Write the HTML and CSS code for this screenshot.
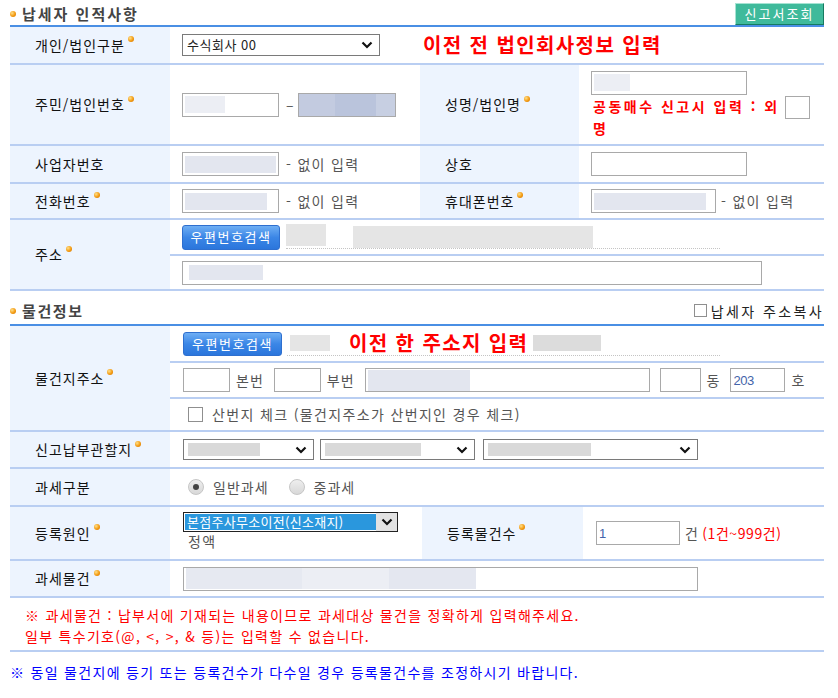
FILE: index.html
```html
<!DOCTYPE html>
<html lang="ko">

<head>
    <meta charset="UTF-8">
    <meta name="viewport" content="width=device-width, initial-scale=1.0">
    <title>납세자 인적사항</title>
    <link rel="stylesheet" href="styles.css">
</head>

<body>
    <div class="wrap">
        <div class="sec-head first">
            <h2 class="sec-title"><span class="dot"></span>납세자 인적사항</h2>
            <button class="btn-view" type="button">신고서조회</button>
        </div>

        <div class="form a">
            <div class="row r1">
                <div class="lab">개인/법인구분<i class="req"></i></div>
                <div class="val">
                    <div class="sel s-kind"><span>수식회사 00</span>
                        <svg width="12" height="8" viewBox="0 0 12 8"><polyline points="1.5,1.5 6,6 10.5,1.5" fill="none" stroke="#111" stroke-width="2.2"/></svg>
                    </div>
                </div>
                <div class="val wide"><strong class="notice">이전 전 법인회사정보 입력</strong></div>
            </div>

            <div class="row r2">
                <div class="lab">주민/법인번호<i class="req"></i></div>
                <div class="val">
                    <div class="inp w97"><span class="blur b40 light"></span></div>
                    <span class="dash">–</span>
                    <div class="inp w98 filled"></div>
                </div>
                <div class="lab">성명/법인명<i class="req"></i></div>
                <div class="val col">
                    <div class="inp w156"><span class="blur b36 light"></span></div>
                    <div class="joint">
                        <p class="warn">공동매수 신고시 입력 : 외<br>명</p>
                        <input class="inp small" type="text">
                    </div>
                </div>
            </div>

            <div class="row r3">
                <div class="lab">사업자번호</div>
                <div class="val">
                    <div class="inp w97"><span class="blur b92"></span></div>
                    <span class="hint">- 없이 입력</span>
                </div>
                <div class="lab">상호</div>
                <div class="val">
                    <input class="inp w156" type="text">
                </div>
            </div>

            <div class="row r4">
                <div class="lab">전화번호<i class="req"></i></div>
                <div class="val">
                    <div class="inp w97"><span class="blur b82"></span></div>
                    <span class="hint">- 없이 입력</span>
                </div>
                <div class="lab">휴대폰번호<i class="req"></i></div>
                <div class="val">
                    <div class="inp w125"><span class="blur b112"></span></div>
                    <span class="hint h6">- 없이 입력</span>
                </div>
            </div>

            <div class="row r5">
                <div class="lab">주소<i class="req"></i></div>
                <div class="stack">
                    <div class="sub s-a">
                        <button class="btn-zip" type="button">우편번호검색</button>
                        <div class="addr a1">
                            <span class="gbox g40"></span>
                            <span class="gbox g240"></span>
                        </div>
                    </div>
                    <div class="sub s-b">
                        <div class="inp w580"><span class="blur b74"></span></div>
                    </div>
                </div>
            </div>
        </div>

        <div class="sec-head second">
            <h2 class="sec-title"><span class="dot"></span>물건정보</h2>
            <label class="copy"><input class="chk small" type="checkbox">납세자 주소복사</label>
        </div>

        <div class="form b">
            <div class="row rb1">
                <div class="lab">물건지주소<i class="req"></i></div>
                <div class="stack">
                    <div class="sub t1">
                        <button class="btn-zip tall" type="button">우편번호검색</button>
                        <div class="addr a2">
                            <span class="gbox g40b"></span>
                            <strong class="notice">이전 한 주소지 입력</strong>
                            <span class="gbox g68"></span>
                        </div>
                    </div>
                    <div class="sub t2">
                        <input class="inp w47" type="text"><span class="unit">본번</span>
                        <input class="inp w47" type="text"><span class="unit">부번</span>
                        <div class="inp w285"><span class="blur b102"></span></div>
                        <input class="inp w41" type="text"><span class="unit">동</span>
                        <input class="inp w55 num" type="text" value="203"><span class="unit">호</span>
                    </div>
                    <div class="sub t3">
                        <label class="mount"><input class="chk" type="checkbox">산번지 체크 (물건지주소가 산번지인 경우 체크)</label>
                    </div>
                </div>
            </div>

            <div class="row rb2">
                <div class="lab">신고납부관할지<i class="req"></i></div>
                <div class="val wide2">
                    <div class="sel s-o1"><span class="blur b72 grey"></span>
                        <svg width="12" height="8" viewBox="0 0 12 8"><polyline points="1.5,1.5 6,6 10.5,1.5" fill="none" stroke="#111" stroke-width="2.2"/></svg>
                    </div>
                    <div class="sel s-o2"><span class="blur b96 grey"></span>
                        <svg width="12" height="8" viewBox="0 0 12 8"><polyline points="1.5,1.5 6,6 10.5,1.5" fill="none" stroke="#111" stroke-width="2.2"/></svg>
                    </div>
                    <div class="sel s-o3"><span class="blur b103 grey"></span>
                        <svg width="12" height="8" viewBox="0 0 12 8"><polyline points="1.5,1.5 6,6 10.5,1.5" fill="none" stroke="#111" stroke-width="2.2"/></svg>
                    </div>
                </div>
            </div>

            <div class="row rb3">
                <div class="lab">과세구분</div>
                <div class="val wide2">
                    <label class="opt"><input class="rad" type="radio" name="tax" checked>일반과세</label>
                    <label class="opt"><input class="rad" type="radio" name="tax">중과세</label>
                </div>
            </div>

            <div class="row rb4">
                <div class="lab">등록원인<i class="req"></i></div>
                <div class="val col top">
                    <div class="sel focus">
                        <span class="picked">본점주사무소이전(신소재지)</span>
                        <span class="arrow"><svg width="12" height="8" viewBox="0 0 12 8"><polyline points="1.5,1.5 6,6 10.5,1.5" fill="none" stroke="#111" stroke-width="2.2"/></svg></span>
                    </div>
                    <span class="hint h0">정액</span>
                </div>
                <div class="lab">등록물건수<i class="req"></i></div>
                <div class="val">
                    <input class="inp w84 num" type="text" value="1">
                    <span class="hint h6">건</span>
                    <span class="range">(1건~999건)</span>
                </div>
            </div>

            <div class="row rb5">
                <div class="lab">과세물건<i class="req"></i></div>
                <div class="val wide2">
                    <div class="inp w515"><span class="blur b290"></span></div>
                </div>
            </div>

            <div class="row rb6">
                <div class="notes">
                    <p>※ 과세물건 : 납부서에 기재되는 내용이므로 과세대상 물건을 정확하게 입력해주세요.</p>
                    <p>일부 특수기호(@, &lt;, &gt;, &amp; 등)는 입력할 수 없습니다.</p>
                </div>
            </div>
        </div>

        <p class="blue-note">※ 동일 물건지에 등기 또는 등록건수가 다수일 경우 등록물건수를 조정하시기 바랍니다.</p>
    </div>
</body>

</html>
```

FILE: styles.css
```css
* {
    margin: 0;
    padding: 0;
    box-sizing: border-box;
}
body {
    font-family: "Noto Sans CJK KR", "Noto Sans", sans-serif;
    font-size: 14px;
    line-height: 1.3;
    color: #222;
    background: #fff;
}
input,
button {
    font: inherit;
}
.wrap {
    width: 814px;
    margin-left: 10px;
}

/* section heads */
.sec-head {
    display: flex;
    justify-content: space-between;
    align-items: flex-end;
}
.sec-head.first {
    height: 25px;
}
.sec-head.second {
    height: 33px;
}
.sec-title {
    display: flex;
    align-items: center;
    font-size: 15px;
    font-weight: bold;
    color: #444;
    letter-spacing: 2px;
    line-height: 18px;
    padding-bottom: 2px;
}
.second .sec-title {
    padding-bottom: 4px;
    letter-spacing: 1.6px;
}
.dot,
.req {
    display: inline-block;
    width: 6px;
    height: 6px;
    border-radius: 50%;
    background: radial-gradient(circle at 35% 35%, #ffe08a, #f39a10 55%, #d07000);
}
.dot {
    margin-right: 6px;
}
.req {
    position: relative;
    top: -6px;
    margin-left: 3px;
}
.btn-view {
    width: 89px;
    height: 22px;
    background: #3fba9b;
    border: 1px solid;
    border-color: #a6e3d3 #167a60 #167a60 #a6e3d3;
    color: #fff;
    font-size: 13px;
    letter-spacing: 2px;
    line-height: 18px;
}
.copy {
    display: flex;
    align-items: center;
    font-size: 14px;
    letter-spacing: 2.4px;
    color: #222;
    padding-bottom: 4px;
}

/* grid rows */
.form {
    border-top: 2px solid #4a8fe4;
}
.row {
    display: grid;
    box-sizing: content-box;
    border-bottom: 2px solid #b9cef2;
}
.form.a .row {
    grid-template-columns: 160px 250px 159px 245px;
}
.form.b .row {
    grid-template-columns: 160px 252px 161px 241px;
}
.r1 { height: 36px; }
.r2 { height: 79px; }
.r3 { height: 36px; }
.r4 { height: 34px; }
.r5 { height: 69px; }
.rb1 { height: 104px; }
.rb2 { height: 35px; }
.rb3 { height: 36px; }
.rb4 { height: 52px; }
.rb5 { height: 35px; }
.rb6 { height: 52px; }

.lab {
    background: #edf4fe;
    display: flex;
    align-items: center;
    padding-left: 25px;
    letter-spacing: 1px;
    color: #111;
}
.val {
    display: flex;
    align-items: center;
    padding-left: 12px;
    color: #555;
    letter-spacing: 1px;
}
.form.b .val {
    padding-left: 13px;
}
.val.wide {
    grid-column: 3 / 5;
    padding-left: 3px;
}
.val.wide2 {
    grid-column: 2 / 5;
}
.val.col {
    flex-direction: column;
    align-items: flex-start;
    justify-content: center;
}
.val.col.top {
    justify-content: flex-start;
    padding-top: 5px;
}
.stack {
    grid-column: 2 / 5;
    display: flex;
    flex-direction: column;
}
.sub {
    display: flex;
    align-items: center;
    padding-left: 12px;
    color: #555;
    letter-spacing: 1px;
}
.form.b .sub {
    padding-left: 13px;
}
.s-a,
.t1,
.t2 {
    box-sizing: content-box;
    border-bottom: 2px solid #b9cef2;
}
.s-a { height: 34px; }
.s-b { height: 33px; }
.t1 { height: 35px; }
.t2 { height: 34px; }
.t3 { height: 31px; }

/* fields */
.inp {
    display: flex;
    align-items: center;
    height: 24px;
    border: 1px solid #a9a9a9;
    background: #fff;
    padding: 0 2px;
    color: #4464aa;
    outline: none;
}
.inp.filled {
    background: linear-gradient(90deg, #c3cbe0 0 38%, #bac4dc 38% 80%, #c7cfe2 80%);
}
.inp.small {
    width: 25px;
    height: 23px;
    margin-left: 7px;
}
.w41 { width: 41px; margin-left: 10px; }
.w47 { width: 47px; }
.w55 { width: 55px; }
.w84 { width: 84px; }
.w97 { width: 97px; }
.w98 { width: 98px; }
.w125 { width: 125px; }
.w156 { width: 156px; }
.w285 { width: 285px; }
.w515 { width: 515px; }
.w580 { width: 580px; }
.num {
    font-family: "Liberation Sans", sans-serif;
    font-size: 13px;
    letter-spacing: -0.5px;
}
.blur {
    display: block;
    height: 17px;
    background: #e3e6ef;
}
.blur.light {
    background: #eceef4;
}
.blur.grey {
    background: #d9d9d9;
    height: 13px;
}
.b36 { width: 36px; }
.b40 { width: 40px; }
.b72 { width: 72px; }
.b74 { width: 74px; height: 15px; margin-left: 4px; }
.b82 { width: 82px; }
.b92 { width: 92px; }
.b96 { width: 96px; }
.b102 { width: 102px; height: 21px; }
.b103 { width: 103px; }
.b112 { width: 112px; }
.b290 {
    width: 290px;
    height: 21px;
    background: linear-gradient(90deg, #e6e9f1 0 40%, #eceef4 40% 70%, #e4e7f0 70%);
}
.dash {
    margin: 0 3px 0 7px;
    color: #555;
}
.hint {
    margin-left: 7px;
    color: #555;
    letter-spacing: 1.3px;
}
.hint.h6 {
    margin-left: 5px;
}
.hint.h0 {
    margin: 0 0 0 5px;
    line-height: 18px;
}
.unit {
    margin: 0 10px 0 6px;
    color: #555;
}
.range {
    color: #f00;
    margin-left: 3px;
    letter-spacing: 0.6px;
}
.joint {
    display: flex;
    align-items: flex-start;
}
.warn {
    color: #f00;
    font-weight: bold;
    letter-spacing: 2.5px;
    line-height: 22px;
    white-space: nowrap;
    padding-left: 2px;
}
.joint .inp.small {
    margin-top: 1px;
    margin-left: 5px;
}
.notice {
    color: #f00;
    font-size: 20px;
    font-weight: bold;
    letter-spacing: 1.4px;
    line-height: 24px;
}

/* selects */
.sel {
    display: flex;
    align-items: center;
    justify-content: space-between;
    height: 22px;
    border: 1px solid #7a7a7a;
    background: #fff;
    padding: 0 6px 0 4px;
    color: #222;
    font-size: 13px;
    letter-spacing: 0.5px;
}
.s-kind { width: 198px; }
.s-o1 { width: 131px; height: 21px; margin-right: 6px; }
.s-o2 { width: 155px; height: 21px; margin-right: 8px; }
.s-o3 { width: 215px; height: 21px; }
.sel.focus {
    width: 215px;
    height: 20px;
    border-color: #222;
    padding: 0 0 0 1px;
}
.picked {
    flex: 1;
    height: 16px;
    line-height: 16px;
    background: #2a97dd;
    color: #fff;
    padding-left: 2px;
    letter-spacing: 0.3px;
    white-space: nowrap;
}
.arrow {
    width: 21px;
    height: 18px;
    background: #e2e2e2;
    display: flex;
    align-items: center;
    justify-content: center;
}

/* buttons */
.btn-zip {
    width: 98px;
    height: 25px;
    border: 1px solid #2e6fcf;
    border-radius: 3px;
    background: linear-gradient(#6eaef4, #3b86e6 50%, #2b76dc);
    color: #fff;
    font-size: 13px;
    letter-spacing: 1.5px;
    line-height: 20px;
}
.btn-zip.tall {
    width: 99px;
    height: 24px;
}
.addr {
    display: flex;
    align-items: center;
    width: 434px;
    height: 24px;
    border-bottom: 1px dotted #c4c4c4;
    margin-left: 6px;
}
.addr.a2 {
    width: 433px;
    margin-left: 5px;
    padding-left: 3px;
}
.gbox {
    display: block;
    background: #e5e5e5;
}
.g40 { width: 40px; height: 22px; margin-top: -4px; }
.g240 { width: 240px; height: 22px; margin-left: 27px; }
.g40b { width: 40px; height: 16px; margin-right: 19px; }
.g68 { width: 68px; height: 16px; margin-left: 5px; background: #dcdcdc; }

/* checks and radios */
.chk {
    appearance: none;
    width: 15px;
    height: 15px;
    border: 1px solid #8f8f8f;
    background: #fff;
    margin-right: 9px;
}
.chk.small {
    width: 13px;
    height: 13px;
    margin-right: 4px;
}
.mount {
    display: flex;
    align-items: center;
    margin-left: 5px;
    color: #555;
    letter-spacing: 1.35px;
}
.opt {
    display: flex;
    align-items: center;
    margin: 0 20px 0 5px;
    color: #555;
}
.opt + .opt {
    margin-left: 0;
}
.rad {
    appearance: none;
    width: 16px;
    height: 16px;
    border-radius: 50%;
    border: 1px solid #c6c6c6;
    background: linear-gradient(#eeeeee, #d8d8d8);
    display: grid;
    place-content: center;
    margin-right: 9px;
}
.rad:checked::before {
    content: "";
    width: 6px;
    height: 6px;
    border-radius: 50%;
    background: #444;
}

/* notes */
.notes {
    grid-column: 1 / 5;
    padding: 3px 0 0 15px;
    color: #f00;
    letter-spacing: 1.3px;
    line-height: 21px;
    display: flex;
    flex-direction: column;
    justify-content: center;
}
.blue-note {
    margin-top: 11px;
    color: #0000ff;
    letter-spacing: 1.3px;
    line-height: 18px;
}
```
